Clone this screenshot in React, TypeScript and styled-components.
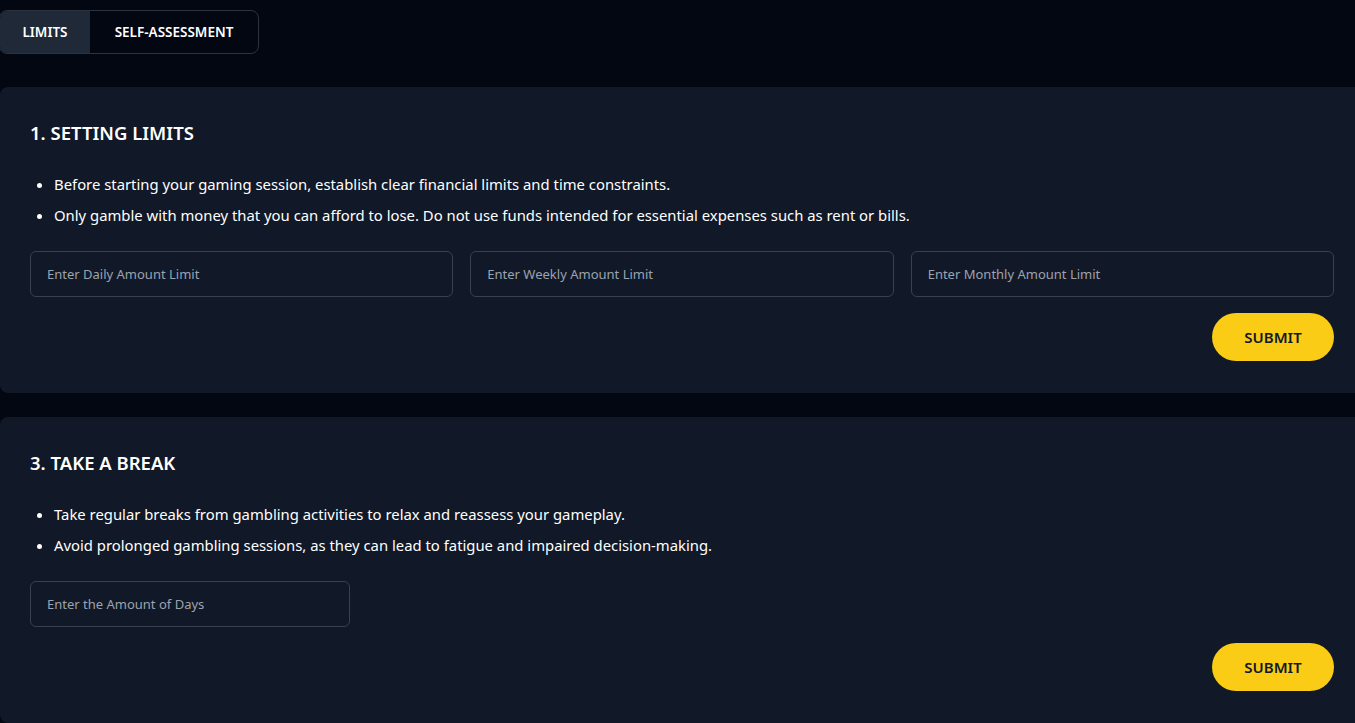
import React from "react";
import styled, { createGlobalStyle } from "styled-components";

const Global = createGlobalStyle`
  html, body { margin: 0; padding: 0; background: #030712; }
  body { font-family: "Noto Sans", "Open Sans", sans-serif; color: #fff; overflow: hidden; }
  * { box-sizing: border-box; }
`;

const Page = styled.div`
  display: flex;
  flex-direction: column;
  padding-top: 10px;
  width: 1355px;
  height: 723px;
  overflow: hidden;
`;

const Tabs = styled.div`
  display: flex;
  align-self: flex-start;
  height: 45px;
  border: 1px solid #2b3340;
  border-radius: 8px;
  overflow: hidden;
  margin-bottom: 33px;
  margin-left: -1px;
`;

const Tab = styled.button<{ $active?: boolean }>`
  border: none;
  background: ${(p) => (p.$active ? "#1f2937" : "transparent")};
  color: #fff;
  font-family: inherit;
  font-weight: 600;
  font-size: 13.5px;
  padding: 0;
  width: ${(p) => (p.$active ? "90px" : "168px")};
  cursor: pointer;
`;

const Cards = styled.div`
  display: flex;
  flex-direction: column;
  gap: 24px;
`;

const Card = styled.section`
  background: #111827;
  border-radius: 8px 0 0 8px;
  padding: 32px 21px 32px 30px;
  display: flex;
  flex-direction: column;
`;

const Heading = styled.h2`
  margin: 0;
  font-size: 18.5px;
  line-height: 28px;
  font-weight: 600;
`;

const List = styled.ul`
  margin: 25px 0 0;
  padding-left: 24px;
  display: flex;
  flex-direction: column;
  gap: 7px;
`;

const Item = styled.li`
  font-size: 14.85px;
  line-height: 24px;
`;

const InputRow = styled.div<{ $cols: number }>`
  margin-top: 24px;
  display: grid;
  grid-template-columns: ${(p) => (p.$cols === 1 ? "320px" : `repeat(${p.$cols}, 1fr)`)};
  gap: 17px;
`;

const Input = styled.input`
  height: 46px;
  background: transparent;
  border: 1px solid #374151;
  border-radius: 6px;
  padding: 0 16px;
  font-family: inherit;
  font-size: 13px;
  color: #fff;
  outline: none;
  &::placeholder { color: #9ca3af; }
`;

const Actions = styled.div`
  margin-top: 16px;
  display: flex;
  justify-content: flex-end;
`;

const Submit = styled.button`
  width: 122px;
  height: 48px;
  border: none;
  border-radius: 999px;
  background: #facc15;
  color: #111827;
  font-family: inherit;
  font-size: 15px;
  font-weight: 600;
  cursor: pointer;
`;

export default function App() {
  return (
    <>
      <Global />
      <Page>
        <Tabs>
          <Tab $active>LIMITS</Tab>
          <Tab>SELF-ASSESSMENT</Tab>
        </Tabs>
        <Cards>
          <Card>
            <Heading>1. SETTING LIMITS</Heading>
            <List>
              <Item>Before starting your gaming session, establish clear financial limits and time constraints.</Item>
              <Item>Only gamble with money that you can afford to lose. Do not use funds intended for essential expenses such as rent or bills.</Item>
            </List>
            <InputRow $cols={3}>
              <Input placeholder="Enter Daily Amount Limit" />
              <Input placeholder="Enter Weekly Amount Limit" />
              <Input placeholder="Enter Monthly Amount Limit" />
            </InputRow>
            <Actions>
              <Submit>SUBMIT</Submit>
            </Actions>
          </Card>
          <Card>
            <Heading>3. TAKE A BREAK</Heading>
            <List>
              <Item>Take regular breaks from gambling activities to relax and reassess your gameplay.</Item>
              <Item>Avoid prolonged gambling sessions, as they can lead to fatigue and impaired decision-making.</Item>
            </List>
            <InputRow $cols={1}>
              <Input placeholder="Enter the Amount of Days" />
            </InputRow>
            <Actions>
              <Submit>SUBMIT</Submit>
            </Actions>
          </Card>
        </Cards>
      </Page>
    </>
  );
}
